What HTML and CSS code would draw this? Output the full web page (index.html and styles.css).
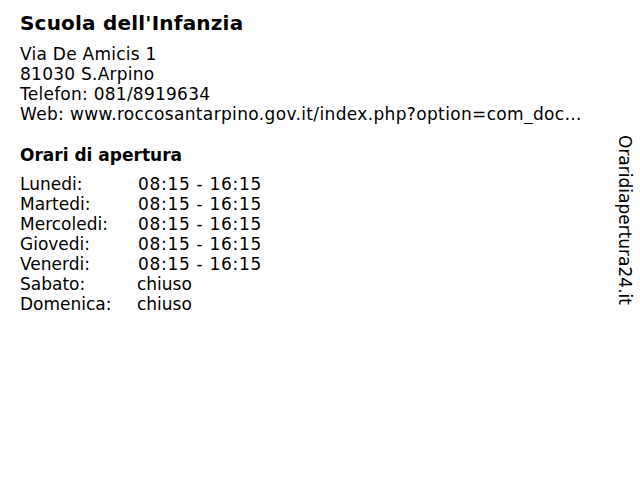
FILE: index.html
```html
<!DOCTYPE html>
<html lang="it">
<head>
    <meta charset="UTF-8">
    <title>Scuola dell'Infanzia</title>
    <link rel="stylesheet" href="styles.css">
</head>
<body>
    <div class="page">
        <div class="info">
            <h1>Scuola dell'Infanzia</h1>
            <div class="address">
                <p>Via De Amicis 1</p>
                <p>81030 S.Arpino</p>
                <p>Telefon: 081/8919634</p>
                <p class="web">Web: www.roccosantarpino.gov.it/index.php?option=com_docman&amp;task=cat_view</p>
            </div>
            <h2>Orari di apertura</h2>
            <div class="hours">
                <span>Lunedi:</span><span class="time">08:15 - 16:15</span>
                <span>Martedi:</span><span class="time">08:15 - 16:15</span>
                <span>Mercoledi:</span><span class="time">08:15 - 16:15</span>
                <span>Giovedi:</span><span class="time">08:15 - 16:15</span>
                <span>Venerdi:</span><span class="time">08:15 - 16:15</span>
                <span>Sabato:</span><span class="closed">chiuso</span>
                <span>Domenica:</span><span class="closed">chiuso</span>
            </div>
        </div>
        <div class="brand">Oraridiapertura24.it</div>
    </div>
</body>
</html>
```

FILE: styles.css
```css
body {
    margin: 0;
    background-color: #ffffff;
    color: #000000;
    font-family: "DejaVu Sans", Verdana, sans-serif;
}

.page {
    position: relative;
    width: 640px;
    height: 480px;
    display: flex;
}

.info {
    width: 570px;
    padding: 11px 0 0 20px;
}

h1 {
    font-size: 20px;
    font-weight: bold;
    letter-spacing: 0.2px;
    line-height: 24px;
    margin: 0 0 9px 0;
}

.address p {
    margin: 0;
    font-size: 17px;
    line-height: 20px;
    letter-spacing: 0.25px;
    white-space: nowrap;
}

.address .web {
    width: 563px;
    letter-spacing: 0.35px;
    overflow: hidden;
    text-overflow: ellipsis;
}

h2 {
    font-size: 17px;
    font-weight: bold;
    line-height: 20px;
    margin: 21px 0 9px 0;
}

.hours {
    display: grid;
    grid-template-columns: 118px auto;
    font-size: 17px;
    line-height: 20px;
}

.hours .time {
    letter-spacing: 0.7px;
}

.hours .closed {
    margin-left: -1px;
}

.brand {
    position: absolute;
    top: 135px;
    right: 5px;
    writing-mode: vertical-rl;
    font-family: "DejaVu Sans", sans-serif;
    font-size: 17px;
    color: #000000;
}
```
